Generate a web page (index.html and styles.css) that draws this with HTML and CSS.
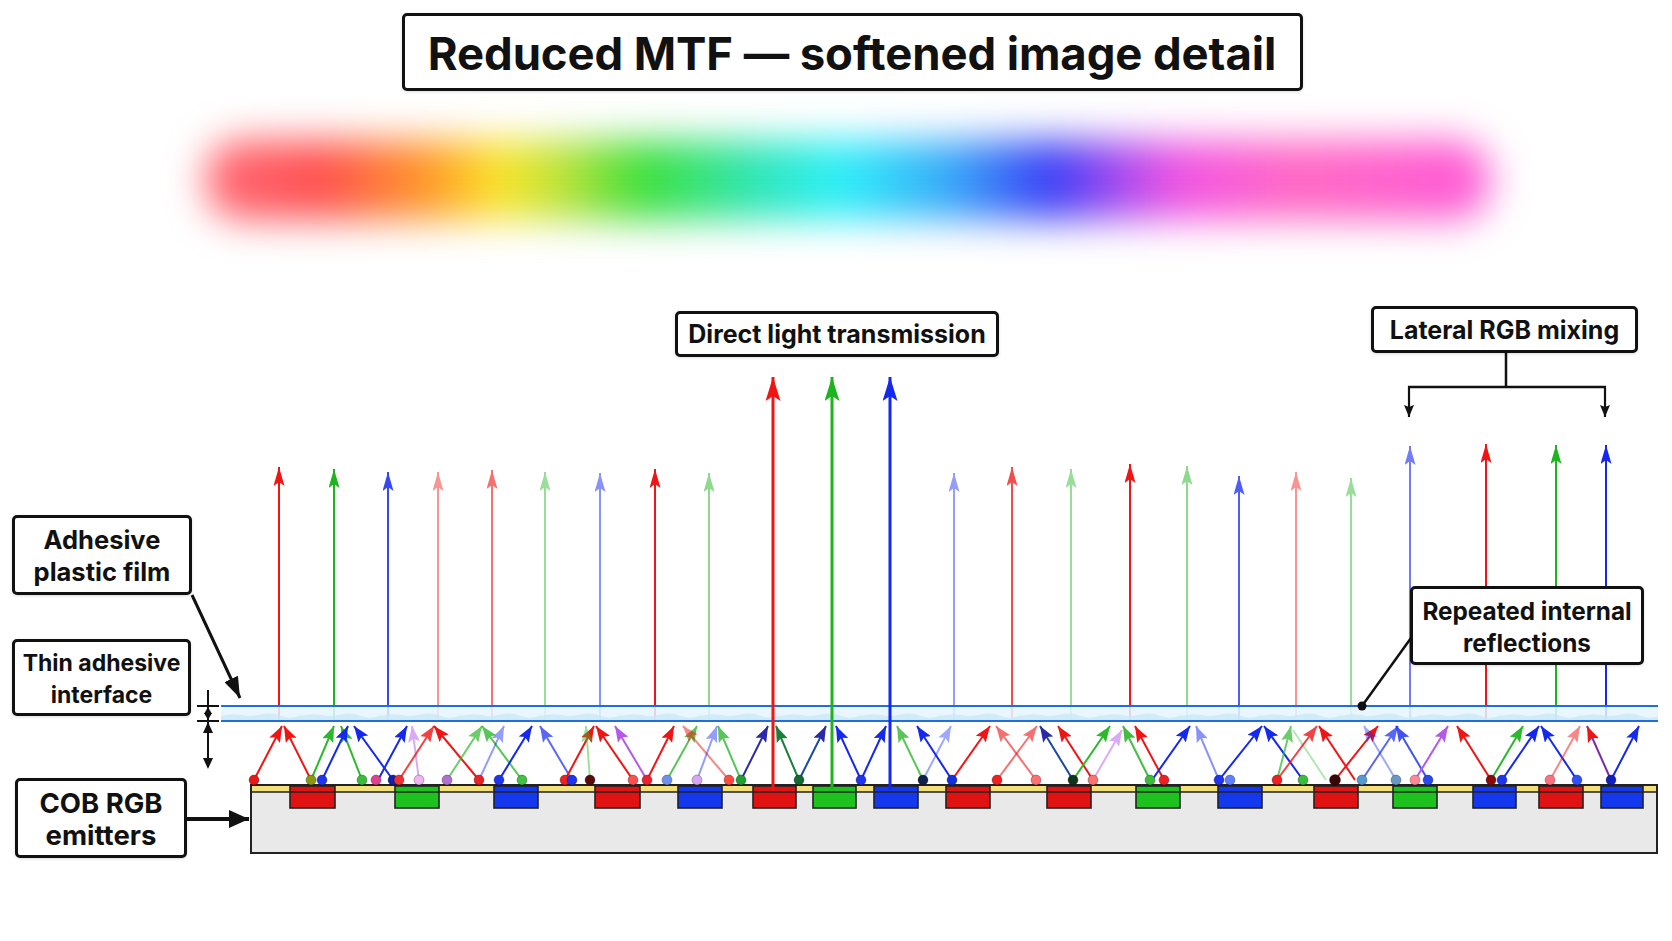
FILE: index.html
```html
<!DOCTYPE html>
<html lang="en">
<head>
<meta charset="utf-8">
<title>Reduced MTF — softened image detail</title>
<link rel="stylesheet" href="styles.css">
</head>
<body>
<div class="page">
  <header class="title-row">
    <h1 class="title">Reduced MTF — softened image detail</h1>
  </header>
  <div class="spectrum-row"><div class="spectrum"></div></div>
  <section class="diagram">
    <svg class="canvas" viewBox="0 260 1672 681" width="1672" height="681" xmlns="http://www.w3.org/2000/svg">
      <defs>
        <marker id="vr" viewBox="0 0 19 11" refX="19" refY="5.5" markerWidth="19" markerHeight="11" markerUnits="userSpaceOnUse" orient="auto"><path d="M0,0 L19,5.5 L0,11 L4,5.5 z" fill="#f01414"/></marker>
        <marker id="vg" viewBox="0 0 19 11" refX="19" refY="5.5" markerWidth="19" markerHeight="11" markerUnits="userSpaceOnUse" orient="auto"><path d="M0,0 L19,5.5 L0,11 L4,5.5 z" fill="#1db41d"/></marker>
        <marker id="vb" viewBox="0 0 19 11" refX="19" refY="5.5" markerWidth="19" markerHeight="11" markerUnits="userSpaceOnUse" orient="auto"><path d="M0,0 L19,5.5 L0,11 L4,5.5 z" fill="#1428f0"/></marker>
        <marker id="br" viewBox="0 0 24 15" refX="24" refY="7.5" markerWidth="24" markerHeight="15" markerUnits="userSpaceOnUse" orient="auto"><path d="M0,0 L24,7.5 L0,15 L5,7.5 z" fill="#f01414"/></marker>
        <marker id="bg" viewBox="0 0 24 15" refX="24" refY="7.5" markerWidth="24" markerHeight="15" markerUnits="userSpaceOnUse" orient="auto"><path d="M0,0 L24,7.5 L0,15 L5,7.5 z" fill="#1db41d"/></marker>
        <marker id="bb" viewBox="0 0 24 15" refX="24" refY="7.5" markerWidth="24" markerHeight="15" markerUnits="userSpaceOnUse" orient="auto"><path d="M0,0 L24,7.5 L0,15 L5,7.5 z" fill="#1428f0"/></marker>
        <marker id="sr" viewBox="0 0 16 12" refX="16" refY="6" markerWidth="16" markerHeight="12" markerUnits="userSpaceOnUse" orient="auto"><path d="M0,0 L16,6 L0,12 L3,6 z" fill="#f01414"/></marker>
        <marker id="sg" viewBox="0 0 16 12" refX="16" refY="6" markerWidth="16" markerHeight="12" markerUnits="userSpaceOnUse" orient="auto"><path d="M0,0 L16,6 L0,12 L3,6 z" fill="#2cb82c"/></marker>
        <marker id="sb" viewBox="0 0 16 12" refX="16" refY="6" markerWidth="16" markerHeight="12" markerUnits="userSpaceOnUse" orient="auto"><path d="M0,0 L16,6 L0,12 L3,6 z" fill="#1428f0"/></marker>
        <marker id="sp" viewBox="0 0 16 12" refX="16" refY="6" markerWidth="16" markerHeight="12" markerUnits="userSpaceOnUse" orient="auto"><path d="M0,0 L16,6 L0,12 L3,6 z" fill="#b45ae6"/></marker>
        <marker id="sn" viewBox="0 0 16 12" refX="16" refY="6" markerWidth="16" markerHeight="12" markerUnits="userSpaceOnUse" orient="auto"><path d="M0,0 L16,6 L0,12 L3,6 z" fill="#2a2aa8"/></marker>
        <marker id="sk" viewBox="0 0 16 12" refX="16" refY="6" markerWidth="16" markerHeight="12" markerUnits="userSpaceOnUse" orient="auto"><path d="M0,0 L16,6 L0,12 L3,6 z" fill="#17803a"/></marker>
        <marker id="kb" viewBox="0 0 12 10" refX="12" refY="5" markerWidth="12" markerHeight="10" markerUnits="userSpaceOnUse" orient="auto"><path d="M0,0 L12,5 L0,10 L2,5 z" fill="#111"/></marker>
        <marker id="kl" viewBox="0 0 21 15" refX="21" refY="7.5" markerWidth="21" markerHeight="15" markerUnits="userSpaceOnUse" orient="auto"><path d="M0,0 L21,7.5 L0,15 z" fill="#111"/></marker>
        <marker id="kc" viewBox="0 0 20 18" refX="20" refY="9" markerWidth="20" markerHeight="18" markerUnits="userSpaceOnUse" orient="auto"><path d="M0,0 L20,9 L0,18 z" fill="#111"/></marker>
        <pattern id="wave" x="221" y="705" width="80" height="16" patternUnits="userSpaceOnUse">
          <path d="M0,11 Q10,8 20,10 T40,9.5 T60,11 T80,10 V16 H0 Z" fill="#c8e7f8"/>
        </pattern>
      </defs>

      <!-- vertical transmitted rays -->
      <g class="vert">
        <line x1="279" y1="721" x2="279" y2="467" stroke="#f01414" marker-end="url(#vr)"/>
        <line x1="334" y1="721" x2="334" y2="469" stroke="#1db41d" marker-end="url(#vg)"/>
        <line x1="388" y1="721" x2="388" y2="472" stroke="#1428f0" marker-end="url(#vb)" opacity="0.85"/>
        <line x1="438" y1="721" x2="438" y2="472" stroke="#f01414" marker-end="url(#vr)" opacity="0.45"/>
        <line x1="492" y1="721" x2="492" y2="470" stroke="#f01414" marker-end="url(#vr)" opacity="0.6"/>
        <line x1="545" y1="721" x2="545" y2="472" stroke="#1db41d" marker-end="url(#vg)" opacity="0.45"/>
        <line x1="600" y1="721" x2="600" y2="473" stroke="#1428f0" marker-end="url(#vb)" opacity="0.5"/>
        <line x1="655" y1="721" x2="655" y2="469" stroke="#f01414" marker-end="url(#vr)"/>
        <line x1="709" y1="721" x2="709" y2="473" stroke="#1db41d" marker-end="url(#vg)" opacity="0.5"/>
        <line x1="954" y1="721" x2="954" y2="473" stroke="#1428f0" marker-end="url(#vb)" opacity="0.45"/>
        <line x1="1012" y1="721" x2="1012" y2="467" stroke="#f01414" marker-end="url(#vr)" opacity="0.75"/>
        <line x1="1071" y1="721" x2="1071" y2="469" stroke="#1db41d" marker-end="url(#vg)" opacity="0.45"/>
        <line x1="1130" y1="721" x2="1130" y2="464" stroke="#f01414" marker-end="url(#vr)"/>
        <line x1="1187" y1="721" x2="1187" y2="466" stroke="#1db41d" marker-end="url(#vg)" opacity="0.5"/>
        <line x1="1239" y1="721" x2="1239" y2="476" stroke="#1428f0" marker-end="url(#vb)" opacity="0.75"/>
        <line x1="1296" y1="721" x2="1296" y2="472" stroke="#f01414" marker-end="url(#vr)" opacity="0.45"/>
        <line x1="1351" y1="721" x2="1351" y2="478" stroke="#1db41d" marker-end="url(#vg)" opacity="0.45"/>
        <line x1="1410" y1="721" x2="1410" y2="446" stroke="#1428f0" marker-end="url(#vb)" opacity="0.6"/>
        <line x1="1486" y1="721" x2="1486" y2="444" stroke="#f01414" marker-end="url(#vr)"/>
        <line x1="1556" y1="721" x2="1556" y2="445" stroke="#1db41d" marker-end="url(#vg)"/>
        <line x1="1606" y1="721" x2="1606" y2="445" stroke="#1428f0" marker-end="url(#vb)"/>
      </g>

      <!-- adhesive film -->
      <rect x="221" y="705" width="1437" height="16" fill="#e6f5fd" fill-opacity="0.85"/>
      <rect x="221" y="705" width="1437" height="16" fill="url(#wave)" opacity="0.75"/>
      <line x1="221" y1="706" x2="1658" y2="706" stroke="#1f6fd8" stroke-width="2"/>
      <line x1="221" y1="721" x2="1658" y2="721" stroke="#1f6fd8" stroke-width="2"/>

      <!-- internal reflections -->
      <g class="zig">
        <line x1="254" y1="780" x2="282" y2="726" stroke="#f01414" marker-end="url(#sr)"/>
        <line x1="311" y1="780" x2="284" y2="726" stroke="#f01414" marker-end="url(#sr)"/>
        <line x1="311" y1="780" x2="334" y2="726" stroke="#2cb82c" marker-end="url(#sg)"/>
        <line x1="362" y1="780" x2="341" y2="726" stroke="#2cb82c" marker-end="url(#sg)"/>
        <line x1="322" y1="780" x2="348" y2="726" stroke="#1428f0" marker-end="url(#sb)"/>
        <line x1="393" y1="780" x2="354" y2="726" stroke="#1428f0" marker-end="url(#sb)"/>
        <line x1="378" y1="780" x2="407" y2="726" stroke="#1428f0" marker-end="url(#sb)"/>
        <line x1="419" y1="780" x2="412" y2="726" stroke="#b45ae6" marker-end="url(#sp)" opacity="0.5"/>
        <line x1="399" y1="780" x2="434" y2="726" stroke="#f01414" marker-end="url(#sr)" opacity="0.8"/>
        <line x1="479" y1="780" x2="434" y2="726" stroke="#f01414" marker-end="url(#sr)"/>
        <line x1="447" y1="780" x2="482" y2="726" stroke="#2cb82c" marker-end="url(#sg)" opacity="0.7"/>
        <line x1="522" y1="780" x2="482" y2="726" stroke="#2cb82c" marker-end="url(#sg)" opacity="0.8"/>
        <line x1="479" y1="780" x2="504" y2="726" stroke="#1428f0" marker-end="url(#sb)" opacity="0.45"/>
        <line x1="499" y1="780" x2="532" y2="726" stroke="#1428f0" marker-end="url(#sb)"/>
        <line x1="572" y1="780" x2="540" y2="726" stroke="#1428f0" marker-end="url(#sb)" opacity="0.7"/>
        <line x1="565" y1="780" x2="594" y2="726" stroke="#f01414" marker-end="url(#sr)"/>
        <line x1="590" y1="780" x2="586" y2="726" stroke="#2cb82c" marker-end="url(#sg)" opacity="0.45"/>
        <line x1="633" y1="780" x2="596" y2="726" stroke="#f01414" marker-end="url(#sr)"/>
        <line x1="647" y1="780" x2="615" y2="726" stroke="#b45ae6" marker-end="url(#sp)"/>
        <line x1="647" y1="780" x2="674" y2="726" stroke="#f01414" marker-end="url(#sr)"/>
        <line x1="667" y1="780" x2="697" y2="726" stroke="#2cb82c" marker-end="url(#sg)" opacity="0.8"/>
        <line x1="729" y1="780" x2="683" y2="726" stroke="#f01414" marker-end="url(#sr)" opacity="0.5"/>
        <line x1="697" y1="780" x2="717" y2="726" stroke="#1428f0" marker-end="url(#sb)" opacity="0.45"/>
        <line x1="741" y1="780" x2="718" y2="726" stroke="#2cb82c" marker-end="url(#sg)" opacity="0.8"/>
        <line x1="741" y1="780" x2="768" y2="726" stroke="#2a2aa8" marker-end="url(#sn)"/>
        <line x1="799" y1="780" x2="776" y2="726" stroke="#17803a" marker-end="url(#sk)"/>
        <line x1="799" y1="780" x2="826" y2="726" stroke="#1a4aa0" marker-end="url(#sn)"/>
        <line x1="861" y1="780" x2="836" y2="726" stroke="#1428f0" marker-end="url(#sb)"/>
        <line x1="861" y1="780" x2="886" y2="726" stroke="#1428f0" marker-end="url(#sb)"/>
        <line x1="923" y1="780" x2="897" y2="726" stroke="#2cb82c" marker-end="url(#sg)" opacity="0.8"/>
        <line x1="923" y1="780" x2="951" y2="726" stroke="#1428f0" marker-end="url(#sb)" opacity="0.4"/>
        <line x1="952" y1="780" x2="917" y2="726" stroke="#1428f0" marker-end="url(#sb)"/>
        <line x1="952" y1="780" x2="990" y2="726" stroke="#f01414" marker-end="url(#sr)"/>
        <line x1="1036" y1="780" x2="996" y2="726" stroke="#f01414" marker-end="url(#sr)" opacity="0.6"/>
        <line x1="997" y1="780" x2="1037" y2="726" stroke="#f01414" marker-end="url(#sr)" opacity="0.6"/>
        <line x1="1073" y1="780" x2="1040" y2="726" stroke="#1a4aa0" marker-end="url(#sn)"/>
        <line x1="1093" y1="780" x2="1058" y2="726" stroke="#f01414" marker-end="url(#sr)"/>
        <line x1="1073" y1="780" x2="1110" y2="726" stroke="#2cb82c" marker-end="url(#sg)"/>
        <line x1="1093" y1="780" x2="1122" y2="730" stroke="#b45ae6" marker-end="url(#sp)" opacity="0.5"/>
        <line x1="1150" y1="780" x2="1123" y2="726" stroke="#2cb82c" marker-end="url(#sg)" opacity="0.9"/>
        <line x1="1164" y1="780" x2="1135" y2="726" stroke="#f01414" marker-end="url(#sr)"/>
        <line x1="1152" y1="780" x2="1190" y2="726" stroke="#1428f0" marker-end="url(#sb)"/>
        <line x1="1219" y1="780" x2="1196" y2="726" stroke="#1428f0" marker-end="url(#sb)" opacity="0.5"/>
        <line x1="1219" y1="780" x2="1262" y2="726" stroke="#1428f0" marker-end="url(#sb)"/>
        <line x1="1303" y1="780" x2="1264" y2="726" stroke="#1428f0" marker-end="url(#sb)"/>
        <line x1="1277" y1="780" x2="1291" y2="726" stroke="#2cb82c" marker-end="url(#sg)" opacity="0.7"/>
        <line x1="1326" y1="780" x2="1293" y2="730" stroke="#2cb82c" opacity="0.35"/>
        <line x1="1277" y1="780" x2="1317" y2="726" stroke="#f01414" marker-end="url(#sr)" opacity="0.8"/>
        <line x1="1355" y1="780" x2="1319" y2="726" stroke="#f01414" marker-end="url(#sr)"/>
        <line x1="1335" y1="780" x2="1378" y2="726" stroke="#f01414" marker-end="url(#sr)"/>
        <line x1="1362" y1="780" x2="1398" y2="726" stroke="#1428f0" marker-end="url(#sb)" opacity="0.7"/>
        <line x1="1428" y1="780" x2="1396" y2="726" stroke="#1428f0" marker-end="url(#sb)" opacity="0.8"/>
        <line x1="1396" y1="780" x2="1364" y2="726" stroke="#1428f0" marker-end="url(#sb)" opacity="0.4"/>
        <line x1="1415" y1="780" x2="1448" y2="726" stroke="#b45ae6" marker-end="url(#sp)"/>
        <line x1="1491" y1="780" x2="1457" y2="726" stroke="#f01414" marker-end="url(#sr)"/>
        <line x1="1491" y1="780" x2="1523" y2="726" stroke="#2cb82c" marker-end="url(#sg)"/>
        <line x1="1502" y1="780" x2="1539" y2="726" stroke="#1428f0" marker-end="url(#sb)"/>
        <line x1="1577" y1="780" x2="1541" y2="726" stroke="#1428f0" marker-end="url(#sb)"/>
        <line x1="1550" y1="780" x2="1580" y2="726" stroke="#f01414" marker-end="url(#sr)" opacity="0.5"/>
        <line x1="1611" y1="780" x2="1587" y2="726" stroke="#7a2aa8" marker-end="url(#sr)"/>
        <line x1="1611" y1="780" x2="1639" y2="726" stroke="#1428f0" marker-end="url(#sb)"/>
      </g>

      <!-- COB substrate -->
      <rect x="251" y="785" width="1406" height="68" fill="#e9e9e9" stroke="#222" stroke-width="2"/>
      <rect x="252" y="786" width="1404" height="6" fill="#f4e07a"/>
      <g class="chips" stroke="#222" stroke-width="1.6">
        <rect x="290" y="786" width="45" height="22" fill="#e01212"/>
        <rect x="395" y="786" width="44" height="22" fill="#1ec21e"/>
        <rect x="494" y="786" width="44" height="22" fill="#1438ee"/>
        <rect x="595" y="786" width="45" height="22" fill="#e01212"/>
        <rect x="678" y="786" width="44" height="22" fill="#1438ee"/>
        <rect x="753" y="786" width="43" height="22" fill="#e01212"/>
        <rect x="813" y="786" width="43" height="22" fill="#1ec21e"/>
        <rect x="874" y="786" width="44" height="22" fill="#1438ee"/>
        <rect x="946" y="786" width="44" height="22" fill="#e01212"/>
        <rect x="1047" y="786" width="44" height="22" fill="#e01212"/>
        <rect x="1136" y="786" width="44" height="22" fill="#1ec21e"/>
        <rect x="1218" y="786" width="44" height="22" fill="#1438ee"/>
        <rect x="1314" y="786" width="44" height="22" fill="#e01212"/>
        <rect x="1393" y="786" width="44" height="22" fill="#1ec21e"/>
        <rect x="1473" y="786" width="43" height="22" fill="#1438ee"/>
        <rect x="1539" y="786" width="44" height="22" fill="#e01212"/>
        <rect x="1601" y="786" width="42" height="22" fill="#1438ee"/>
      </g>
      <line x1="251" y1="792" x2="1657" y2="792" stroke="#222" stroke-width="1.6"/>

      <!-- direct transmission -->
      <line x1="773" y1="790" x2="773" y2="377" stroke="#f01414" stroke-width="3" marker-end="url(#br)"/>
      <line x1="832" y1="790" x2="832" y2="377" stroke="#1db41d" stroke-width="3" marker-end="url(#bg)"/>
      <line x1="890" y1="790" x2="890" y2="377" stroke="#1428f0" stroke-width="3" marker-end="url(#bb)"/>

      <!-- emission dots -->
      <g class="dots" stroke="rgba(0,0,0,0.35)" stroke-width="0.8">
        <circle cx="254" cy="780" r="5" fill="#e81818"/>
        <circle cx="311" cy="780" r="5" fill="#8a9a10"/>
        <circle cx="322" cy="780" r="5" fill="#1e34f0"/>
        <circle cx="362" cy="780" r="5" fill="#3cbc3c"/>
        <circle cx="376" cy="780" r="5" fill="#e04090"/>
        <circle cx="393" cy="780" r="5" fill="#1020b0"/>
        <circle cx="399" cy="780" r="5" fill="#f03030"/>
        <circle cx="419" cy="780" r="5" fill="#f0b4f0"/>
        <circle cx="447" cy="780" r="5" fill="#b070d0"/>
        <circle cx="479" cy="780" r="5" fill="#ee2020"/>
        <circle cx="499" cy="780" r="5" fill="#1e34f0"/>
        <circle cx="522" cy="780" r="5" fill="#44c044"/>
        <circle cx="565" cy="780" r="5" fill="#ee2020"/>
        <circle cx="572" cy="780" r="5" fill="#1e34f0"/>
        <circle cx="590" cy="780" r="5" fill="#5a0a0a"/>
        <circle cx="633" cy="780" r="5" fill="#ff5050"/>
        <circle cx="647" cy="780" r="5" fill="#ee2030"/>
        <circle cx="667" cy="780" r="5" fill="#7090f0"/>
        <circle cx="697" cy="780" r="5" fill="#d8a6f4"/>
        <circle cx="729" cy="780" r="5" fill="#ff4a40"/>
        <circle cx="741" cy="780" r="5" fill="#20a030"/>
        <circle cx="799" cy="780" r="5" fill="#126a32"/>
        <circle cx="861" cy="780" r="5" fill="#1e34f0"/>
        <circle cx="923" cy="780" r="5" fill="#10204a"/>
        <circle cx="952" cy="780" r="5" fill="#1030e0"/>
        <circle cx="997" cy="780" r="5" fill="#ee2020"/>
        <circle cx="1036" cy="780" r="5" fill="#ff7070"/>
        <circle cx="1073" cy="780" r="5" fill="#103418"/>
        <circle cx="1093" cy="780" r="5" fill="#ff7070"/>
        <circle cx="1150" cy="780" r="5" fill="#3cbc3c"/>
        <circle cx="1164" cy="780" r="5" fill="#ee2020"/>
        <circle cx="1219" cy="780" r="5" fill="#1e34f0"/>
        <circle cx="1230" cy="780" r="5" fill="#6080ff"/>
        <circle cx="1277" cy="780" r="5" fill="#ee2020"/>
        <circle cx="1303" cy="780" r="5" fill="#3cbc3c"/>
        <circle cx="1335" cy="780" r="5.5" fill="#3a0606"/>
        <circle cx="1362" cy="780" r="5" fill="#5898d4"/>
        <circle cx="1396" cy="780" r="5" fill="#6a98c4"/>
        <circle cx="1415" cy="780" r="5" fill="#ff8898"/>
        <circle cx="1428" cy="780" r="5" fill="#2a48f0"/>
        <circle cx="1491" cy="780" r="5" fill="#8a0a0a"/>
        <circle cx="1502" cy="780" r="5" fill="#1e34f0"/>
        <circle cx="1550" cy="780" r="5" fill="#ff7080"/>
        <circle cx="1577" cy="780" r="5" fill="#3050ff"/>
        <circle cx="1611" cy="780" r="5" fill="#1020c0"/>
      </g>

      <!-- dimension marker -->
      <g class="dim" stroke="#111" stroke-width="2" fill="#111">
        <line x1="208" y1="690" x2="208" y2="767"/>
        <line x1="197" y1="706" x2="219" y2="706"/>
        <line x1="197" y1="721" x2="219" y2="721"/>
        <polygon points="208,707 204,714 212,714" stroke="none"/>
        <polygon points="208,720 204,713 212,713" stroke="none"/>
        <polygon points="208,722 203,733 213,733" stroke="none"/>
        <polygon points="208,769 203,758 213,758" stroke="none"/>
      </g>

      <!-- connectors -->
      <g class="conn" stroke="#111" fill="none">
        <line x1="192" y1="595" x2="240" y2="698" stroke-width="3" marker-end="url(#kl)"/>
        <line x1="187" y1="819" x2="249" y2="819" stroke-width="4" marker-end="url(#kc)"/>
        <path d="M1506,352 V387 M1408,387 H1606" stroke-width="2.5"/>
        <line x1="1409" y1="386" x2="1409" y2="417" stroke-width="2.2" marker-end="url(#kb)"/>
        <line x1="1605" y1="386" x2="1605" y2="417" stroke-width="2.2" marker-end="url(#kb)"/>
        <line x1="1411" y1="638" x2="1362" y2="706" stroke-width="2.5"/>
      </g>
      <circle cx="1362" cy="706" r="4.5" fill="#111"/>
    </svg>

    <div class="label label-direct">Direct light transmission</div>
    <div class="label label-lateral">Lateral RGB mixing</div>
    <div class="label label-side label-film">Adhesive<br>plastic film</div>
    <div class="label label-side label-thin">Thin adhesive<br>interface</div>
    <div class="label label-side label-cob">COB RGB<br>emitters</div>
    <div class="label label-repeat">Repeated internal<br>reflections</div>
  </section>
</div>
</body>
</html>
```

FILE: styles.css
```css
html, body {
  margin: 0;
  padding: 0;
  background: #ffffff;
}

.page {
  width: 1672px;
  height: 941px;
  overflow: hidden;
  position: relative;
  background: #ffffff;
  font-family: Inter, "Noto Sans", "Liberation Sans", sans-serif;
  color: #111;
}

.title-row {
  display: flex;
  justify-content: center;
  padding: 13px 0 0 32px;
  height: 91px;
  box-sizing: border-box;
}

.title {
  margin: 0;
  width: 901px;
  height: 78px;
  box-sizing: border-box;
  border: 3px solid #111;
  border-radius: 5px;
  display: flex;
  align-items: center;
  justify-content: center;
  padding-top: 3px;
  font-size: 45.5px;
  font-weight: 700;
  letter-spacing: -0.1px;
  background: #fff;
  box-shadow: 0 1px 3px rgba(0,0,0,0.15);
}

.spectrum-row {
  height: 169px;
  display: flex;
  align-items: center;
  padding-left: 205px;
}

.spectrum {
  width: 1285px;
  height: 80px;
  margin-top: 8px;
  border-radius: 36px;
  filter: blur(19px);
  background: linear-gradient(90deg,
    #ff6a78 0%,
    #ff5050 9%,
    #ff9a28 17.5%,
    #fbe62a 23%,
    #b8e23a 28%,
    #3ee03a 34%,
    #2fe6b8 43%,
    #2ef0fa 49.5%,
    #38a8f8 58%,
    #3a3ff6 65.8%,
    #a84af0 71.2%,
    #f255e2 76%,
    #ff69c4 85%,
    #ff58d6 100%);
}

.diagram {
  position: relative;
  height: 681px;
}

.canvas {
  display: block;
}

.vert line {
  stroke-width: 2;
}

.zig line {
  stroke-width: 2;
}

.label {
  position: absolute;
  box-sizing: border-box;
  background: #fff;
  border: 3px solid #111;
  border-radius: 5px;
  display: flex;
  align-items: center;
  justify-content: center;
  text-align: center;
  font-weight: 700;
  font-size: 25px;
  line-height: 32px;
  white-space: nowrap;
  box-shadow: 0 1px 3px rgba(0,0,0,0.15);
}

.label-direct {
  left: 675px;
  top: 51px;
  width: 324px;
  height: 46px;
}

.label-lateral {
  left: 1371px;
  top: 46px;
  width: 267px;
  height: 47px;
}

.label-film {
  left: 12px;
  top: 255px;
  width: 180px;
  height: 80px;
  font-size: 25.5px;
  padding-top: 2px;
}

.label-thin {
  left: 12px;
  top: 379px;
  width: 179px;
  height: 77px;
  font-size: 23px;
  padding-top: 2px;
}

.label-cob {
  left: 15px;
  top: 518px;
  width: 172px;
  height: 80px;
  font-size: 27.5px;
  padding-top: 2px;
}

.label-repeat {
  left: 1410px;
  top: 326px;
  width: 234px;
  height: 79px;
  font-size: 24.3px;
  padding-top: 2px;
}
```
